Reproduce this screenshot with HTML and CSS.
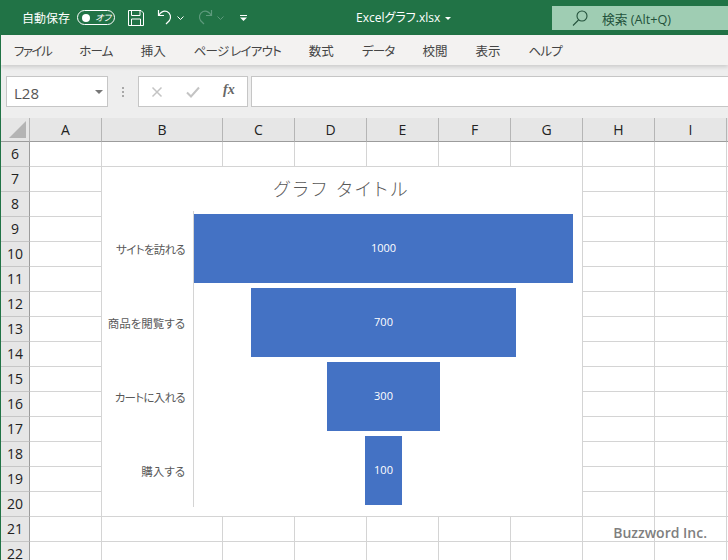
FILE: index.html
```html
<!DOCTYPE html>
<html lang="ja">
<head>
  <meta charset="UTF-8">
  <title>Excelグラフ.xlsx</title>
  <link rel="stylesheet" href="styles.css">
</head>
<body>
  <div class="window">
    <header class="title-bar">
      <div class="quick-access">
        <span class="autosave-label">自動保存</span>
        <span class="toggle"><span class="toggle-dot"></span><span class="toggle-text">オフ</span></span>
        <svg class="qa-icon save-icon" width="16" height="16" viewBox="0 0 16 16" fill="none" stroke="#fff" stroke-width="1">
          <path d="M.5.500h12.500l2.500 2.500v12.500h-15z"/>
          <path d="M3.500.500v5h8.500v-5"/>
          <path d="M3.500 15.500v-6.500h9v6.500"/>
        </svg>
        <svg class="undo-icon" width="16" height="17" viewBox="0 0 16 17" fill="none" stroke="#fff" stroke-width="1.200">
          <path d="M1.500 1v5.500h5.500"/>
          <path d="M2 6c2-3 5-4.500 8-3.500 3.500 1.500 4.500 6 2.500 9l-3.500 3.500"/>
        </svg>
        <svg class="chevron" width="7" height="4" viewBox="0 0 7 4" fill="none" stroke="#fff"><path d="M.5.500l3 3 3-3"/></svg>
        <svg class="redo-icon" width="16" height="17" viewBox="0 0 16 17" fill="none" stroke="#5d9a7c" stroke-width="1.200">
          <path d="M14.500 1v5.500h-5.500"/>
          <path d="M14 6c-2-3-5-4.500-8-3.500-3.500 1.500-4.500 6-2.500 9l3.500 3.500"/>
        </svg>
        <svg class="chevron" width="7" height="4" viewBox="0 0 7 4" fill="none" stroke="#5d9a7c"><path d="M.5.500l3 3 3-3"/></svg>
        <svg class="customize-icon" width="7" height="6" viewBox="0 0 7 6" fill="#fff">
          <rect x="0" y="0" width="7" height="1"/>
          <path d="M0 2.500h7l-3.500 3.500z"/>
        </svg>
      </div>
      <div class="doc-title">Excelグラフ.xlsx<span class="doc-caret"></span></div>
      <div class="search-box">
        <svg width="16" height="16" viewBox="0 0 16 16" fill="none" stroke="#24523c" stroke-width="1.100">
          <circle cx="10" cy="6" r="5"/>
          <path d="M6.500 10l-5.500 5.500"/>
        </svg>
        <span class="search-text">検索 (Alt+Q)</span>
      </div>
    </header>

    <nav class="ribbon-tabs">
      <span class="tab tab-file">ファイル</span>
      <span class="tab tab-kana">ホーム</span>
      <span class="tab">挿入</span>
      <span class="tab tab-kana">ページ レイアウト</span>
      <span class="tab">数式</span>
      <span class="tab tab-kana">データ</span>
      <span class="tab">校閲</span>
      <span class="tab">表示</span>
      <span class="tab tab-kana">ヘルプ</span>
    </nav>

    <div class="formula-bar">
      <div class="name-box"><span class="name-text">L28</span><span class="name-caret"></span></div>
      <div class="grip"><i></i><i></i><i></i></div>
      <div class="formula-buttons">
        <svg width="12" height="12" viewBox="0 0 12 12" fill="none" stroke="#c4c4c4" stroke-width="1.500"><path d="M1.500 1.500l9 9M10.500 1.500l-9 9"/></svg>
        <svg width="14" height="12" viewBox="0 0 14 12" fill="none" stroke="#c4c4c4" stroke-width="2"><path d="M1 6.500l4 4 8-9"/></svg>
        <span class="fx">fx</span>
      </div>
      <div class="formula-input"></div>
    </div>

    <div class="sheet" id="sheet">
      <div class="chart">
        <div class="chart-title">グラフ タイトル</div>
        <div class="chart-body">
          <div class="chart-labels">
            <div class="chart-label label-kana">サイトを訪れる</div>
            <div class="chart-label">商品を閲覧する</div>
            <div class="chart-label label-kana">カートに入れる</div>
            <div class="chart-label">購入する</div>
          </div>
          <div class="plot">
            <div class="bar-row"><div class="bar bar-1000">1000</div></div>
            <div class="bar-row"><div class="bar bar-700">700</div></div>
            <div class="bar-row"><div class="bar bar-300">300</div></div>
            <div class="bar-row"><div class="bar bar-100">100</div></div>
          </div>
        </div>
      </div>
      <div class="watermark">Buzzword Inc.</div>
    </div>
  </div>

  <script>
    // Build the spreadsheet cells
    const sheet = document.getElementById("sheet");
    const cols = ["A", "B", "C", "D", "E", "F", "G", "H", "I", ""];

    function addCell(className, text) {
      const cell = document.createElement("div");
      cell.className = className;
      cell.textContent = text || "";
      sheet.appendChild(cell);
    }

    addCell("corner");
    cols.forEach(c => addCell("col-head", c));
    for (let row = 6; row <= 22; row++) {
      addCell("row-head", row);
      cols.forEach(() => addCell("cell"));
    }
  </script>
</body>
</html>
```

FILE: styles.css
```css
html, body {
  margin: 0;
  padding: 0;
  height: 100%;
  overflow: hidden;
}

body {
  font-family: "Open Sans", "Noto Sans CJK JP", sans-serif;
  font-feature-settings: "palt";
  background-color: #fff;
}

.window {
  width: 728px;
  height: 560px;
  display: flex;
  flex-direction: column;
  overflow: hidden;
  box-sizing: border-box;
  border-left: 1px solid #217346;
}

/* Title bar */
.title-bar {
  height: 35px;
  flex: none;
  margin-left: -1px;
  background-color: #217346;
  color: #fff;
  display: flex;
  align-items: flex-start;
  position: relative;
}

.quick-access {
  display: flex;
  align-items: center;
  height: 35px;
  padding-left: 22px;
}

.autosave-label {
  font-family: "Noto Sans CJK JP", sans-serif;
  font-size: 12px;
  width: 55px;
}

.toggle {
  width: 29px;
  height: 13px;
  border: 1px solid #fff;
  border-radius: 8px;
  display: flex;
  align-items: center;
  justify-content: space-between;
  padding: 0 3px 0 4px;
}

.toggle-dot {
  width: 8px;
  height: 8px;
  background-color: #fff;
  border-radius: 50%;
}

.toggle-text {
  font-family: "Noto Sans CJK JP", sans-serif;
  font-size: 9px;
  font-style: italic;
  line-height: 13px;
}

.save-icon {
  margin-left: 13px;
}

.undo-icon {
  margin-left: 13px;
}

.chevron {
  margin-left: 4px;
}

.redo-icon {
  margin-left: 13px;
}

.customize-icon {
  margin-left: 16px;
}

.doc-title {
  position: absolute;
  left: 356px;
  top: 0;
  line-height: 35px;
  font-size: 12px;
  white-space: nowrap;
}

.doc-caret {
  display: inline-block;
  margin-left: 5px;
  vertical-align: middle;
  border-left: 3px solid transparent;
  border-right: 3px solid transparent;
  border-top: 3px solid #fff;
}

.search-box {
  position: absolute;
  left: 552px;
  top: 6px;
  width: 176px;
  height: 24px;
  background-color: #9fcdb3;
  color: #23523b;
  display: flex;
  align-items: center;
  padding-left: 20px;
  box-sizing: border-box;
}

.search-text {
  margin-left: 14px;
  font-size: 12.700px;
}

/* Ribbon */
.ribbon-tabs {
  height: 30px;
  flex: none;
  background-color: #f3f2f1;
  display: flex;
  align-items: center;
  padding-left: 13px;
  gap: 28px;
  font-family: "Noto Sans CJK JP", sans-serif;
  font-size: 12.500px;
  color: #444;
  box-shadow: 0 2px 4px rgba(0, 0, 0, 0.15);
  position: relative;
  z-index: 1;
}

.tab {
  white-space: nowrap;
}

.tab-file {
  letter-spacing: -1.500px;
}

.tab-kana {
  letter-spacing: -0.8px;
}

/* Formula bar */
.formula-bar {
  height: 53px;
  flex: none;
  background-color: #eeeeee;
  display: flex;
  align-items: flex-start;
  padding: 11px 0 0 5px;
  box-sizing: border-box;
}

.name-box {
  width: 102px;
  height: 31px;
  box-sizing: border-box;
  background-color: #fff;
  border: 1px solid #c6c6c6;
  display: flex;
  align-items: center;
  justify-content: space-between;
  padding: 0 4px 0 7px;
  color: #555;
}

.name-text {
  font-size: 15px;
  padding-top: 3px;
}

.name-caret {
  border-left: 4px solid transparent;
  border-right: 4px solid transparent;
  border-top: 4px solid #777;
}

.grip {
  width: 30px;
  height: 31px;
  flex: none;
  display: flex;
  flex-direction: column;
  align-items: center;
  justify-content: center;
  gap: 2px;
}

.grip i {
  width: 2px;
  height: 2px;
  background-color: #a8a8a8;
}

.formula-buttons {
  width: 110px;
  height: 31px;
  box-sizing: border-box;
  background-color: #fff;
  border: 1px solid #c6c6c6;
  display: flex;
  align-items: center;
  padding-left: 12px;
  gap: 23px;
}

.fx {
  font-family: "Liberation Serif", serif;
  font-style: italic;
  font-weight: bold;
  font-size: 14px;
  color: #666;
  padding-bottom: 3px;
}

.formula-input {
  flex: 1;
  height: 31px;
  margin-left: 3px;
  box-sizing: border-box;
  background-color: #fff;
  border: 1px solid #c6c6c6;
  border-right: none;
}

/* Sheet */
.sheet {
  position: relative;
  flex: 1;
  display: grid;
  grid-template-columns: 29px 72px 121px repeat(7, 72px) 72px;
  grid-template-rows: 24px repeat(17, 25px);
  background-color: #fff;
}

.corner {
  background-color: #e6e6e6;
  border-right: 1px solid #b5b5b5;
  border-bottom: 1px solid #9c9c9c;
  position: relative;
}

.corner::after {
  content: "";
  position: absolute;
  right: 3px;
  bottom: 3px;
  border-left: 17px solid transparent;
  border-bottom: 17px solid #b4b4b4;
}

.col-head {
  background-color: #e6e6e6;
  border-right: 1px solid #b5b5b5;
  border-bottom: 1px solid #9c9c9c;
  font-size: 14px;
  color: #222;
  text-align: center;
  line-height: 23px;
}

.row-head {
  background-color: #e6e6e6;
  border-right: 1px solid #9c9c9c;
  border-bottom: 1px solid #c6c6c6;
  font-size: 14px;
  color: #222;
  text-align: center;
  line-height: 24px;
}

.cell {
  border-right: 1px solid #d4d4d4;
  border-bottom: 1px solid #d4d4d4;
}

.corner, .col-head, .row-head, .cell {
  box-sizing: border-box;
  min-width: 0;
}

/* Chart sits on top of the cells */
.chart {
  position: absolute;
  left: 101px;
  top: 49px;
  width: 480px;
  height: 349px;
  background-color: #fff;
  z-index: 1;
}

.chart-title {
  height: 44px;
  text-align: center;
  font-family: "Noto Sans CJK JP", sans-serif;
  font-size: 18px;
  font-weight: 300;
  letter-spacing: 3px;
  line-height: 42px;
  color: #595959;
}

.chart-body {
  display: flex;
  height: 296px;
}

.chart-labels {
  width: 91px;
  flex: none;
  padding-top: 1px;
}

.chart-label {
  height: 74px;
  display: flex;
  align-items: center;
  justify-content: flex-end;
  padding-right: 8px;
  box-sizing: border-box;
  font-family: "Noto Sans CJK JP", sans-serif;
  font-size: 11.500px;
  color: #595959;
  white-space: nowrap;
}

.label-kana {
  letter-spacing: -0.7px;
}

.plot {
  flex: 1;
  border-left: 1px solid #d4d4d4;
  padding: 3px 9px 0 0;
}

.bar-row {
  height: 74px;
  display: flex;
  justify-content: center;
  align-items: flex-start;
}

.bar {
  height: 69px;
  background-color: #4472c4;
  color: #fff;
  font-size: 11px;
  line-height: 67px;
  text-align: center;
}

.bar-1000 { width: 379px; }
.bar-700 { width: 265px; }
.bar-300 { width: 113px; }
.bar-100 { width: 37px; }

.watermark {
  position: absolute;
  right: 21px;
  bottom: 25px;
  z-index: 2;
  font-size: 14px;
  font-weight: 600;
  color: #7f7f7f;
}
```
